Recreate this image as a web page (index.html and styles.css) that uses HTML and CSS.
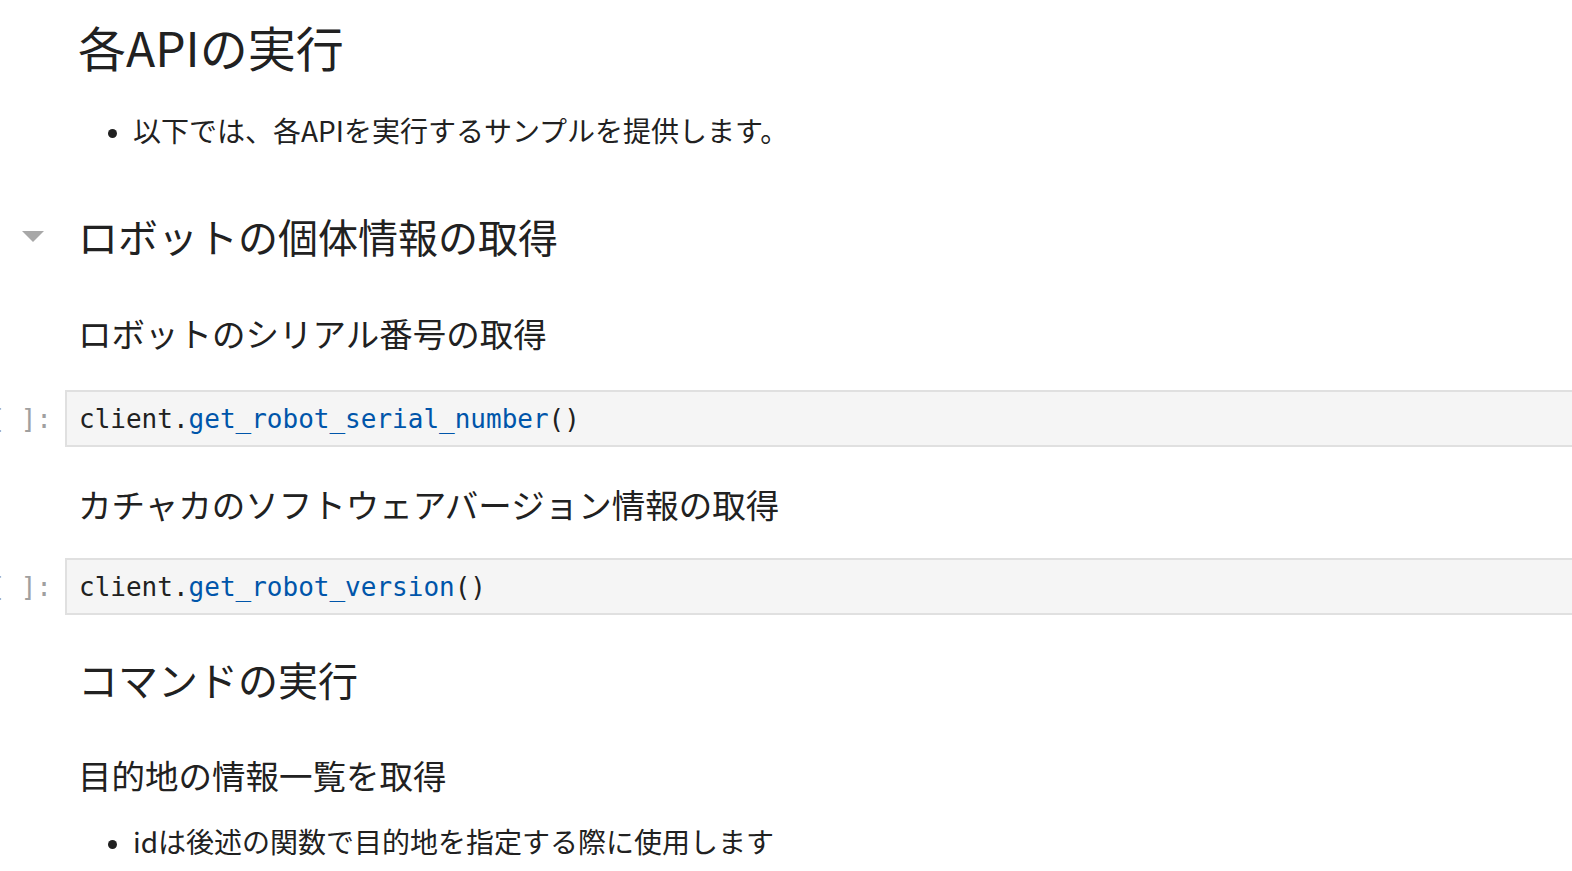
FILE: index.html
```html
<!DOCTYPE html>
<html lang="ja">
<head>
<meta charset="utf-8">
<title>Notebook</title>
<link rel="stylesheet" href="styles.css">
</head>
<body>
<div class="notebook">
  <div class="cell md h1-cell">
    <div class="prompt"></div>
    <div class="content"><h1>各APIの実行</h1></div>
  </div>
  <div class="cell md list-cell first-list">
    <div class="prompt"></div>
    <div class="content"><ul><li>以下では、各APIを実行するサンプルを提供します。</li></ul></div>
  </div>
  <div class="cell md h2-cell first-h2">
    <div class="prompt"><span class="collapser"></span></div>
    <div class="content"><h2>ロボットの個体情報の取得</h2></div>
  </div>
  <div class="cell md h3-cell gap-47">
    <div class="prompt"></div>
    <div class="content"><h3>ロボットのシリアル番号の取得</h3></div>
  </div>
  <div class="cell code-cell gap-35">
    <div class="prompt in-prompt">[ ]:</div>
    <div class="editor"><pre>client.<span class="fn">get_robot_serial_number</span>()</pre></div>
  </div>
  <div class="cell md h3-cell gap-35">
    <div class="prompt"></div>
    <div class="content"><h3>カチャカのソフトウェアバージョン情報の取得</h3></div>
  </div>
  <div class="cell code-cell gap-32">
    <div class="prompt in-prompt">[ ]:</div>
    <div class="editor"><pre>client.<span class="fn">get_robot_version</span>()</pre></div>
  </div>
  <div class="cell md h2-cell gap-36">
    <div class="prompt"></div>
    <div class="content"><h2>コマンドの実行</h2></div>
  </div>
  <div class="cell md h3-cell gap-46">
    <div class="prompt"></div>
    <div class="content"><h3>目的地の情報一覧を取得</h3></div>
  </div>
  <div class="cell md list-cell gap-24">
    <div class="prompt"></div>
    <div class="content"><ul><li>idは後述の関数で目的地を指定する際に使用します</li></ul></div>
  </div>
</div>
</body>
</html>
```

FILE: styles.css
```css
html, body {
  margin: 0;
  padding: 0;
  background: #ffffff;
  overflow: hidden;
}

body {
  font-family: "Noto Sans CJK JP", "Noto Sans", sans-serif;
  color: #212121;
}

.notebook {
  display: flex;
  flex-direction: column;
  margin-right: -40px;
}

.cell {
  display: flex;
  align-items: stretch;
}

.prompt {
  flex: 0 0 65px;
  width: 65px;
  box-sizing: border-box;
  position: relative;
}

.content {
  flex: 1 1 auto;
  padding-left: 13px;
}

h1, h2, h3 {
  margin: 0;
  font-weight: 400;
  color: #212121;
}

h1 {
  font-size: 48px;
  line-height: 60px;
}

h2 {
  font-size: 40px;
  line-height: 56px;
}

h3 {
  font-size: 33.5px;
  line-height: 44px;
}

.h1-cell { margin-top: 16px; }
.first-list { margin-top: 34px; }
.first-h2 { margin-top: 58px; }
.gap-47 { margin-top: 47px; }
.gap-35 { margin-top: 35px; }
.gap-32 { margin-top: 32px; }
.gap-36 { margin-top: 36px; }
.gap-46 { margin-top: 46px; }
.gap-24 { margin-top: 24px; }

ul {
  margin: 0;
  padding-left: 55px;
  font-size: 28px;
  line-height: 40px;
}

li::marker {
  font-size: 24px;
}

.collapser {
  position: absolute;
  left: 22px;
  top: 50%;
  margin-top: -5px;
  width: 0;
  height: 0;
  border-left: 11px solid transparent;
  border-right: 11px solid transparent;
  border-top: 11px solid #a8a8a8;
}

.in-prompt {
  font-family: "DejaVu Sans Mono", monospace;
  font-size: 26px;
  line-height: 52px;
  color: #a0a0a0;
  text-align: right;
  padding-right: 13px;
  white-space: nowrap;
  display: flex;
  justify-content: flex-end;
  align-items: center;
}

.editor {
  flex: 1 1 auto;
  background: #f5f5f5;
  border: 2px solid #e0e0e0;
  height: 53px;
  display: flex;
  align-items: center;
  padding-left: 12px;
}

.editor pre {
  margin: 0;
  font-family: "DejaVu Sans Mono", monospace;
  font-size: 26px;
  line-height: 52px;
  color: #212121;
}

.fn {
  color: #0055aa;
}
```
